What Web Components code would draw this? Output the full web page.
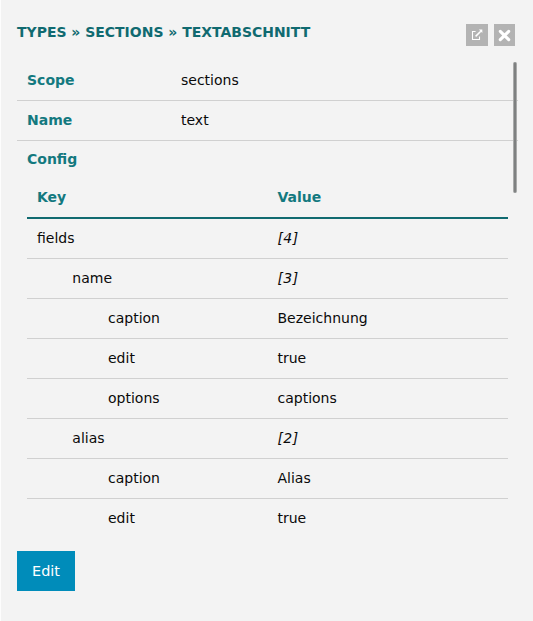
<!DOCTYPE html>
<html lang="de">
<head>
<meta charset="utf-8">
<title>Types</title>
<style>
html,body{margin:0;height:100%}
body{background:#fdfdfd;font:14px/20px "DejaVu Sans",sans-serif;color:#0a0a0a;overflow:hidden}
</style>
</head>
<body>
<type-panel></type-panel>
<script>
const define = (name, html) => customElements.define(name, class extends HTMLElement {
  constructor() {
    super();
    this.attachShadow({ mode: 'open' }).innerHTML = html;
  }
});

define('icon-button', `<style>
:host{display:grid;place-items:center;width:22px;height:22px;background:#b3b3b3;color:#fff}
</style><slot></slot>`);

define('panel-header', `<style>
:host{display:flex;justify-content:space-between;height:37px;padding:24px 18px 0 16px;box-sizing:content-box}
h1{margin:-2px 0 0;font:bold 13.98px/20px "DejaVu Sans",sans-serif;color:#106a70;text-transform:uppercase;white-space:nowrap}
div{display:flex;gap:6px;align-items:flex-start}
svg{display:block}
.close{width:21px}
</style>
<h1><slot></slot></h1>
<div>
<icon-button><svg width="12" height="12" viewBox="0 0 12 12" fill="none" stroke="currentColor"><path d="M4.6 2.5H1.5V10.5H8.5V7.4" stroke-width="1.1"/><path d="M4.6 7.4L9.8 2.2" stroke-width="1.5"/><path d="M7.8.6H11.3V4.1Z" fill="currentColor" stroke="none"/></svg></icon-button>
<icon-button class="close"><svg width="13" height="13" viewBox="0 0 13 13" fill="none" stroke="currentColor"><path d="M2.3 2.3L10.7 10.7M10.7 2.3L2.3 10.7" stroke-width="3.1" stroke-linecap="round"/></svg></icon-button>
</div>`);

define('field-row', `<style>
:host{display:grid;grid-template-columns:154px 1fr;height:39px;line-height:39px;padding-left:10px;border-bottom:1px solid #d0d0d0}
.label{font-weight:bold;color:#13797f}
</style><span class="label"><slot name="label"></slot></span><span><slot></slot></span>`);

define('config-head', `<style>
:host{display:grid;grid-template-columns:240.5px 1fr;height:40px;line-height:40px;padding-left:10px;border-bottom:2px solid #106a70;font-weight:bold;color:#13797f}
</style><slot></slot>`);

define('config-row', `<style>
:host{display:grid;grid-template-columns:240.5px 1fr;height:39px;line-height:39px;padding-left:10px;border-bottom:1px solid #d0d0d0}
:host(:last-of-type){border-bottom-color:transparent}
:host([level="1"]) .key{padding-left:35.3px}
:host([level="2"]) .key{padding-left:71px}
:host([count]) .value{font-style:italic;letter-spacing:.4px}
</style><span class="key"><slot name="key"></slot></span><span class="value"><slot></slot></span>`);

define('config-table', `<style>
:host{display:block;margin:0 10px}
</style><slot></slot>`);

define('scroll-thumb', `<style>
:host{position:absolute;top:1px;left:496px;width:4px;height:131px;border-radius:2px;background:#7e8080;box-sizing:border-box;border:solid #a9aaaa;border-width:0 1px 0 1px}
</style>`);

define('action-button', `<style>
:host{display:block;width:58px}
button{width:58px;height:40px;margin:0;padding:0;border:0;background:#008cba;color:#fff;font:14.4px/40px "DejaVu Sans",sans-serif}
</style><button><slot></slot></button>`);

define('type-panel', `<style>
:host{display:block;margin-left:1px;height:100%;background:#f3f3f3}
main{position:relative;width:501px;height:478px;margin-left:16px}
h2{margin:0;padding:0 10px;height:36px;font:bold 14px/36px "DejaVu Sans",sans-serif;color:#13797f}
footer{padding:12px 16px}
</style>
<panel-header>Types » Sections » Textabschnitt</panel-header>
<main>
<field-row><span slot="label">Scope</span>sections</field-row>
<field-row><span slot="label">Name</span>text</field-row>
<h2>Config</h2>
<config-table>
<config-head><span>Key</span><span>Value</span></config-head>
<config-row count><span slot="key">fields</span>[4]</config-row>
<config-row count level="1"><span slot="key">name</span>[3]</config-row>
<config-row level="2"><span slot="key">caption</span>Bezeichnung</config-row>
<config-row level="2"><span slot="key">edit</span>true</config-row>
<config-row level="2"><span slot="key">options</span>captions</config-row>
<config-row count level="1"><span slot="key">alias</span>[2]</config-row>
<config-row level="2"><span slot="key">caption</span>Alias</config-row>
<config-row level="2"><span slot="key">edit</span>true</config-row>
</config-table>
<scroll-thumb></scroll-thumb>
</main>
<footer><action-button>Edit</action-button></footer>`);
</script>
</body>
</html>
